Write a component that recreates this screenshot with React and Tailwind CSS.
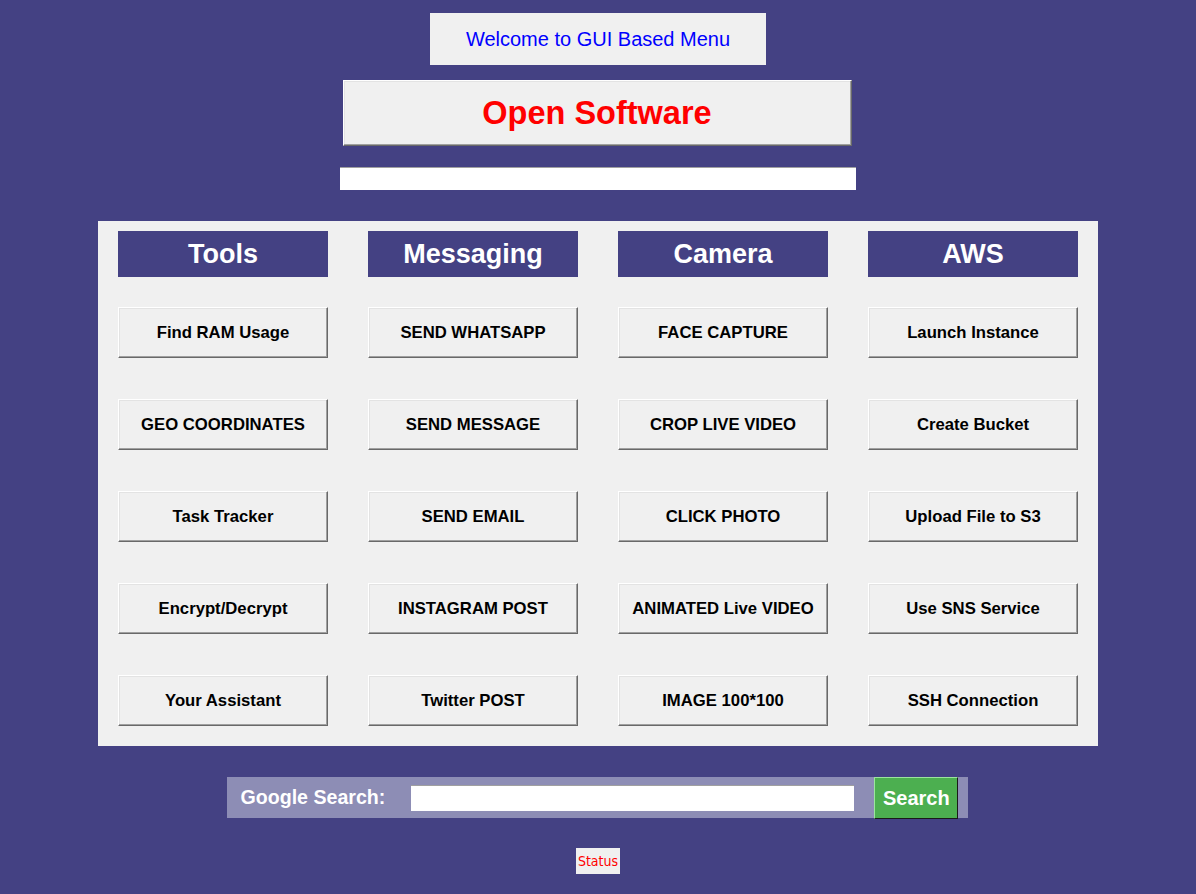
import React from 'react'

const columns = [
  {
    title: 'Tools',
    items: ['Find RAM Usage', 'GEO COORDINATES', 'Task Tracker', 'Encrypt/Decrypt', 'Your Assistant'],
  },
  {
    title: 'Messaging',
    items: ['SEND WHATSAPP', 'SEND MESSAGE', 'SEND EMAIL', 'INSTAGRAM POST', 'Twitter POST'],
  },
  {
    title: 'Camera',
    items: ['FACE CAPTURE', 'CROP LIVE VIDEO', 'CLICK PHOTO', 'ANIMATED Live VIDEO', 'IMAGE 100*100'],
  },
  {
    title: 'AWS',
    items: ['Launch Instance', 'Create Bucket', 'Upload File to S3', 'Use SNS Service', 'SSH Connection'],
  },
]

const raised =
  'border border-t-white border-l-white border-r-[#696969] border-b-[#696969] shadow-[inset_-1px_-1px_0_#a0a0a0,inset_1px_1px_0_#e3e3e3]'

export default function App() {
  return (
    <div className="min-h-[894px] bg-[#444183] font-['Liberation_Sans',Arial,sans-serif] flex flex-col items-center pt-[13px]">
      <div className="w-[336px] h-[52px] bg-[#f0f0f0] flex items-center justify-center text-[20px] text-[#0000ff]">
        Welcome to GUI Based Menu
      </div>

      <button
        className={`mt-[15px] w-[509px] h-[66px] -translate-x-[1px] bg-[#f0f0f0] ${raised} text-[32.5px] font-bold text-[#ff0000] flex items-center justify-center`}
      >
        Open Software
      </button>

      <input className="mt-[21px] w-[516px] h-[23px] bg-white border-t border-t-[#a0a0a0] outline-none" />

      <div className="mt-[31px] w-[1000px] bg-[#f0f0f0] px-[20px] pt-[10px] pb-[20px] grid grid-cols-4 gap-x-[40px]">
        {columns.map((col) => (
          <div key={col.title} className="flex flex-col">
            <div className="h-[46px] bg-[#444183] text-white text-[27px] font-bold flex items-center justify-center">
              {col.title}
            </div>
            <div className="mt-[30px] flex flex-col gap-[41px]">
              {col.items.map((item) => (
                <button
                  key={item}
                  className={`h-[51px] bg-[#f0f0f0] ${raised} text-[16.7px] font-bold text-black flex items-center justify-center`}
                >
                  {item}
                </button>
              ))}
            </div>
          </div>
        ))}
      </div>

      <div className="mt-[31px] w-[741px] h-[41px] -translate-x-[1px] bg-[#8d8db5] flex items-center pl-[14px]">
        <span className="text-white text-[19.6px] font-bold">Google Search:</span>
        <input className="ml-[26px] w-[443px] h-[26px] bg-white border-t border-t-[#a0a0a0] outline-none" />
        <button className="ml-[20px] self-start w-[84px] h-[42px] bg-[#4caf50] border border-t-[#9be59e] border-l-[#9be59e] border-r-[#1a1a1a] border-b-[#1a1a1a] text-white text-[20px] font-bold flex items-center justify-center">
          Search
        </button>
      </div>

      <div className="mt-[30px] h-[26px] px-[2px] bg-[#f0f0f0] text-[#ff0000] text-[14px] font-['DejaVu_Sans_Condensed','Open_Sans',sans-serif] flex items-center">
        Status
      </div>
    </div>
  )
}
